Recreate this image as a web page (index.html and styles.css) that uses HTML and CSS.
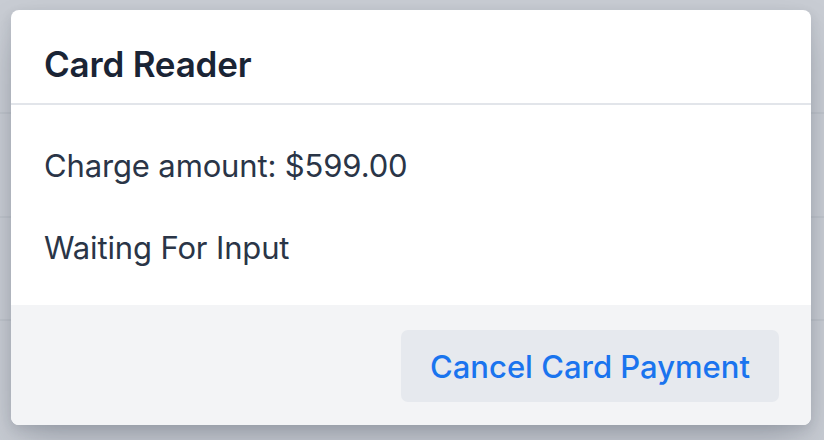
FILE: index.html
```html
<!DOCTYPE html>
<html lang="en">
<head>
<meta charset="utf-8">
<title>Card Reader</title>
<link rel="stylesheet" href="styles.css">
</head>
<body>
<div class="backdrop">
  <div class="modal">
    <div class="modal-header">
      <h2 class="modal-title">Card Reader</h2>
    </div>
    <div class="modal-body">
      <p class="line">Charge amount: $599.00</p>
      <p class="line">Waiting For Input</p>
    </div>
    <div class="modal-footer">
      <button class="btn-cancel" type="button">Cancel Card Payment</button>
    </div>
  </div>
</div>
</body>
</html>
```
FILE: styles.css
```css
html, body {
  margin: 0;
  padding: 0;
}
body {
  width: 824px;
  height: 440px;
  overflow: hidden;
  font-family: Inter, "Noto Sans", sans-serif;
  background-color: #c8ccd3;
  background-image:
    linear-gradient(to bottom, transparent 112px, #bfc4cb 112px, #bfc4cb 114px, transparent 114px),
    linear-gradient(to bottom, transparent 216px, #bfc4cb 216px, #bfc4cb 218px, transparent 218px),
    linear-gradient(to bottom, transparent 319px, #bfc4cb 319px, #bfc4cb 321px, transparent 321px);
}
.backdrop {
  padding: 10px 13px 0 11px;
}
.modal {
  width: 800px;
  background: #ffffff;
  border-radius: 8px;
  overflow: hidden;
  box-shadow: 0 20px 40px -8px rgba(30, 41, 59, 0.25), 0 4px 12px rgba(30, 41, 59, 0.12);
}
.modal-header {
  padding: 34px 33px 19px;
  border-bottom: 2px solid #e2e5ea;
}
.modal-title {
  margin: 0;
  font-size: 35px;
  line-height: 40px;
  font-weight: 600;
  color: #1a2435;
  letter-spacing: -0.2px;
}
.modal-body {
  padding: 37px 33px 33px;
  display: flex;
  flex-direction: column;
  gap: 34px;
}
.line {
  margin: 0;
  font-size: 31px;
  line-height: 48px;
  color: #2a3547;
  letter-spacing: -0.14px;
}
.modal-footer {
  background: #f3f4f6;
  display: flex;
  justify-content: flex-end;
  padding: 25px 32px 23px;
}
.btn-cancel {
  border: none;
  background: #e6e9ee;
  border-radius: 7px;
  height: 72px;
  padding: 0 29px;
  font-family: Inter, "Noto Sans", sans-serif;
  font-size: 31px;
  font-weight: 500;
  color: #1a74ee;
  cursor: pointer;
}
```
